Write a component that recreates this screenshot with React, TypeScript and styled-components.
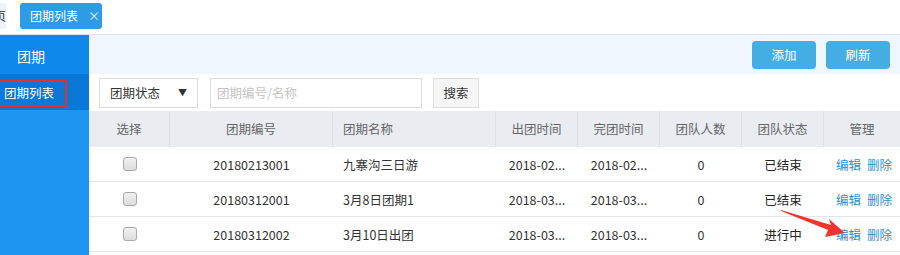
import React from "react";
import styled, { createGlobalStyle } from "styled-components";

const GlobalStyle = createGlobalStyle`
  html, body {
    margin: 0;
    padding: 0;
    background: #ffffff;
  }
  body {
    font-family: "Noto Sans CJK SC", "Liberation Sans", sans-serif;
    font-size: 12px;
    color: #333;
  }
`;

type Row = {
  no: string;
  name: string;
  start: string;
  end: string;
  count: number;
  status: string;
};

const rows: Row[] = [
  { no: "20180213001", name: "九寨沟三日游", start: "2018-02...", end: "2018-02...", count: 0, status: "已结束" },
  { no: "20180312001", name: "3月8日团期1", start: "2018-03...", end: "2018-03...", count: 0, status: "已结束" },
  { no: "20180312002", name: "3月10日出团", start: "2018-03...", end: "2018-03...", count: 0, status: "进行中" },
];

const columns = [
  { title: "选择", width: 81, align: "center" },
  { title: "团期编号", width: 163, align: "center" },
  { title: "团期名称", width: 163, align: "left" },
  { title: "出团时间", width: 82, align: "center" },
  { title: "完团时间", width: 82, align: "center" },
  { title: "团队人数", width: 82, align: "center" },
  { title: "团队状态", width: 82, align: "center" },
  { title: "管理", width: 76, align: "center" },
];

export default function App() {
  return (
    <>
      <GlobalStyle />
      <Page>
        {/* 顶部标签栏 */}
        <TabBar>
          <GhostTab>页</GhostTab>
          <ActiveTab>
            团期列表<Close>×</Close>
          </ActiveTab>
        </TabBar>
        <Body>
          <Sidebar>
            <SideTitle>团期</SideTitle>
            <SideItem>
              <Marked>团期列表</Marked>
            </SideItem>
          </Sidebar>
          <Main>
            <Toolbar>
              <PrimaryBtn>添加</PrimaryBtn>
              <PrimaryBtn>刷新</PrimaryBtn>
            </Toolbar>
            <FilterRow>
              <Select>
                <span>团期状态</span>
                <Caret>▼</Caret>
              </Select>
              <SearchInput>团期编号/名称</SearchInput>
              <SearchBtn>搜索</SearchBtn>
            </FilterRow>
            <Table>
              <HeadRow>
                {columns.map((c) => (
                  <HeadCell key={c.title} $w={c.width} $align={c.align}>
                    {c.title}
                  </HeadCell>
                ))}
              </HeadRow>
              {rows.map((r) => (
                <BodyRow key={r.no}>
                  <Cell $w={81} $align="center">
                    <Check />
                  </Cell>
                  <Cell $w={163} $align="center">{r.no}</Cell>
                  <Cell $w={163} $align="left">{r.name}</Cell>
                  <Cell $w={82} $align="center">{r.start}</Cell>
                  <Cell $w={82} $align="center">{r.end}</Cell>
                  <Cell $w={82} $align="center">{r.count}</Cell>
                  <Cell $w={82} $align="center" $dark>{r.status}</Cell>
                  <Cell $w={76} $align="center">
                    <Links>
                      <LinkText>编辑</LinkText>
                      <LinkText>删除</LinkText>
                    </Links>
                  </Cell>
                </BodyRow>
              ))}
              <Arrow viewBox="0 0 70 30" width="70" height="30">
                <polygon points="0,1 50,16 48,10 64,24 44,28 47,21 0,2" fill="#f5332d" />
              </Arrow>
            </Table>
          </Main>
        </Body>
      </Page>
    </>
  );
}

const Page = styled.div`
  width: 900px;
  height: 255px;
  overflow: hidden;
  display: flex;
  flex-direction: column;
`;

const TabBar = styled.div`
  height: 35px;
  box-sizing: border-box;
  border-bottom: 1px solid #dbe6f2;
  display: flex;
  align-items: flex-start;
  padding-top: 3px;
  gap: 14px;
`;

const GhostTab = styled.div`
  width: 6px;
  height: 26px;
  line-height: 26px;
  background: #eef1f5;
  border-radius: 0 3px 3px 0;
  overflow: hidden;
  direction: rtl;
  font-size: 12px;
  color: #333;
`;

const ActiveTab = styled.div`
  width: 82px;
  height: 26px;
  box-sizing: border-box;
  padding-left: 10px;
  border-radius: 3px;
  background: #2d9be6;
  color: #fff;
  font-size: 12px;
  white-space: nowrap;
  line-height: 26px;
  display: flex;
  align-items: center;
`;

const Close = styled.span`
  margin-left: 10px;
  font-size: 12px;
  color: #e6f2fc;
`;

const Body = styled.div`
  flex: 1;
  display: flex;
`;

const Sidebar = styled.div`
  width: 89px;
  background: #1e95f0;
  display: flex;
  flex-direction: column;
`;

const SideTitle = styled.div`
  height: 39px;
  background: #0f88eb;
  color: #fff;
  font-size: 14px;
  line-height: 42px;
  padding-left: 17px;
`;

const SideItem = styled.div`
  height: 36px;
  background: #0a78d6;
  display: flex;
  align-items: center;
`;

const Marked = styled.span`
  margin-top: 2px;
  box-sizing: border-box;
  width: 67px;
  height: 27px;
  border: 2px solid #ed2d2a;
  border-left: none;
  color: #fff;
  font-size: 12.5px;
  line-height: 22px;
  padding-left: 4px;
  white-space: nowrap;
`;

const Main = styled.div`
  width: 811px;
  display: flex;
  flex-direction: column;
`;

const Toolbar = styled.div`
  height: 39px;
  background: #eff6fd;
  display: flex;
  justify-content: flex-end;
  align-items: center;
  gap: 10px;
  padding-right: 10px;
`;

const PrimaryBtn = styled.div`
  width: 64px;
  height: 28px;
  border-radius: 4px;
  background: #44aee3;
  color: #fff;
  font-size: 12.5px;
  line-height: 28px;
  text-align: center;
`;

const FilterRow = styled.div`
  height: 37px;
  display: flex;
  align-items: center;
  padding-left: 10px;
`;

const Select = styled.div`
  width: 99px;
  height: 30px;
  box-sizing: border-box;
  border: 1px solid #dcdcdc;
  display: flex;
  align-items: center;
  justify-content: space-between;
  padding: 0 10px 0 10px;
  font-size: 12.5px;
  color: #333;
`;

const Caret = styled.span`
  font-size: 9px;
  color: #333;
`;

const SearchInput = styled.div`
  margin-left: 12px;
  width: 212px;
  height: 30px;
  box-sizing: border-box;
  border: 1px solid #dcdcdc;
  padding-left: 6px;
  line-height: 28px;
  font-size: 12.5px;
  color: #c4c4c4;
`;

const SearchBtn = styled.div`
  margin-left: 11px;
  width: 46px;
  height: 30px;
  box-sizing: border-box;
  border: 1px solid #dcdcdc;
  background: #f5f5f5;
  text-align: center;
  line-height: 28px;
  font-size: 12.5px;
  color: #333;
`;

const Table = styled.div`
  position: relative;
  display: flex;
  flex-direction: column;
`;

const HeadRow = styled.div`
  height: 36px;
  background: #e9ecf1;
  display: flex;
`;

const HeadCell = styled.div<{ $w: number; $align: string }>`
  width: ${(p) => p.$w}px;
  box-sizing: border-box;
  border-right: 1px solid #dde1e6;
  text-align: ${(p) => p.$align};
  padding-left: ${(p) => (p.$align === "left" ? "10px" : "0")};
  line-height: 36px;
  font-size: 12.5px;
  color: #666;
  &:last-child {
    border-right: none;
  }
`;

const BodyRow = styled.div`
  height: 35px;
  box-sizing: border-box;
  border-bottom: 1px solid #e2e5ea;
  display: flex;
`;

const Cell = styled.div<{ $w: number; $align: string; $dark?: boolean }>`
  width: ${(p) => p.$w}px;
  box-sizing: border-box;
  display: flex;
  align-items: center;
  justify-content: ${(p) => (p.$align === "left" ? "flex-start" : "center")};
  padding-left: ${(p) => (p.$align === "left" ? "10px" : "0")};
  font-size: 12.5px;
  color: ${(p) => (p.$dark ? "#222" : "#333")};
  white-space: nowrap;
  overflow: hidden;
`;

const Check = styled.span`
  width: 12px;
  height: 12px;
  border: 1px solid #a9a9a9;
  border-radius: 3px;
  background: linear-gradient(#f0f0f0, #dcdcdc);
`;

const Links = styled.div`
  display: flex;
  gap: 6px;
  padding-left: 4px;
`;

const LinkText = styled.span`
  color: #2b8fd8;
  font-size: 12.5px;
`;

const Arrow = styled.svg`
  position: absolute;
  left: 692px;
  top: 98px;
`;
